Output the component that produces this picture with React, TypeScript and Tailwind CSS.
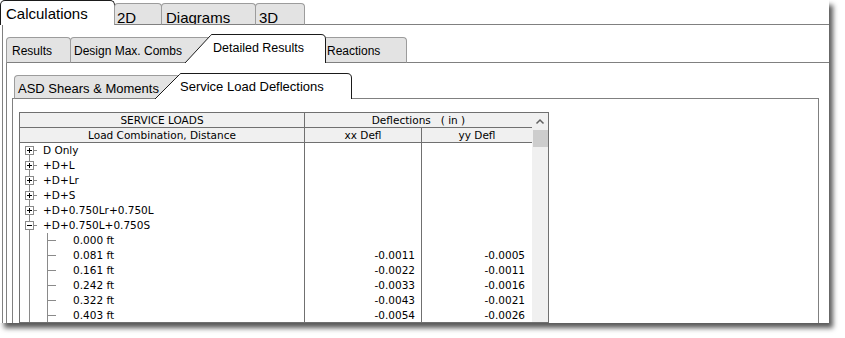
import React from "react";

const LINE = "#8a8a8a";

function TreeParent({ expanded, first }: { expanded?: boolean; first?: boolean }) {
  return (
    <svg width="22" height="15" className="shrink-0" shapeRendering="crispEdges">
      {!first && <line x1="9.5" y1="0" x2="9.5" y2="3" stroke={LINE} />}
      <line x1="9.5" y1="12" x2="9.5" y2="15" stroke={LINE} />
      <line x1="14" y1="7.5" x2="17" y2="7.5" stroke={LINE} />
      <rect x="5.5" y="3.5" width="8" height="8" fill="#fff" stroke={LINE} />
      <line x1="7" y1="7.5" x2="12" y2="7.5" stroke="#000" />
      {!expanded && <line x1="9.5" y1="5" x2="9.5" y2="10" stroke="#000" />}
    </svg>
  );
}

function TreeChild() {
  return (
    <svg width="52" height="15" className="shrink-0" shapeRendering="crispEdges">
      <line x1="9.5" y1="0" x2="9.5" y2="15" stroke={LINE} />
      <line x1="27.5" y1="0" x2="27.5" y2="15" stroke={LINE} />
      <line x1="28" y1="7.5" x2="36" y2="7.5" stroke={LINE} />
    </svg>
  );
}

function Row({ tree, label, xx, yy }: { tree: React.ReactNode; label: string; xx?: string; yy?: string }) {
  return (
    <div className="flex h-[15px] shrink-0 leading-[15px]">
      <div className="w-[285px] border-r border-[#707070] flex items-center">
        {tree}
        <span className="whitespace-pre pl-[1px]">{label}</span>
      </div>
      <div className="w-[117px] border-r border-[#707070] text-right pr-[6px]">{xx}</div>
      <div className="w-[110px] text-right pr-[7px]">{yy}</div>
    </div>
  );
}

const parents = ["D Only", "+D+L", "+D+Lr", "+D+S", "+D+0.750Lr+0.750L"];
const children: [string, string, string][] = [
  ["0.000 ft", "", ""],
  ["0.081 ft", "-0.0011", "-0.0005"],
  ["0.161 ft", "-0.0022", "-0.0011"],
  ["0.242 ft", "-0.0033", "-0.0016"],
  ["0.322 ft", "-0.0043", "-0.0021"],
  ["0.403 ft", "-0.0054", "-0.0026"],
];

export default function App() {
  return (
    <div className="w-[845px] h-[338px] bg-white overflow-hidden font-['Liberation_Sans',Arial,sans-serif] text-black">
      <div className="w-[829px] h-[323px] bg-white flex flex-col overflow-hidden shadow-[4px_5px_5px_rgba(0,0,0,0.65)]">
        {/* Level 1 tabs */}
        <div className="flex items-end h-[25px] shrink-0">
          <div className="w-[115px] h-[25px] bg-white border border-b-0 border-[#1a1a1a] rounded-t-[5px] pl-[5px] pt-[5px] text-[15px] leading-none whitespace-nowrap">
            Calculations
          </div>
          <div className="-ml-px w-[48px] h-[22px] overflow-hidden border border-[#9c9c9c] border-b-[#808080] bg-[#e3e3e3] rounded-t-[4px] pl-[2px] pt-[6px] text-[15px] leading-none">
            2D
          </div>
          <div className="-ml-px w-[95px] h-[22px] overflow-hidden border border-[#9c9c9c] border-b-[#808080] bg-[#e3e3e3] rounded-t-[4px] pl-[4px] pt-[6px] text-[15px] leading-none">
            Diagrams
          </div>
          <div className="-ml-px w-[50px] h-[22px] overflow-hidden border border-[#9c9c9c] border-b-[#808080] bg-[#e3e3e3] rounded-t-[4px] pl-[3px] pt-[6px] text-[15px] leading-none">
            3D
          </div>
          <div className="flex-1 border-b border-[#808080]" />
        </div>

        {/* Level 1 body */}
        <div className="flex-1 min-h-0 ml-[2px] border-l border-[#808080] pl-[3px] pt-[9px] flex flex-col">
          {/* Level 2 tabs */}
          <div className="flex items-end h-[29px] shrink-0">
            <div className="w-[65px] h-[26px] border border-[#9c9c9c] border-b-[#808080] bg-[#e3e3e3] rounded-t-[4px] pl-[5px] pt-[7px] text-[12px] leading-none whitespace-nowrap">
              Results
            </div>
            <div className="-ml-px w-[141px] h-[26px] border border-[#9c9c9c] border-b-[#808080] bg-[#e3e3e3] rounded-t-[4px] pl-[3px] pt-[7px] text-[12px] leading-none whitespace-nowrap">
              Design Max. Combs
            </div>
            <div className="relative -ml-[26px] w-[141px] h-[29px]">
              <svg className="absolute inset-0" width="141" height="29">
                <path d="M0,29 L25.5,1.5 Q26,0.5 27,0.5 L136,0.5 Q140.5,0.5 140.5,5 L140.5,29" fill="#fff" stroke="#1a1a1a" />
              </svg>
              <div className="relative pl-[28px] pt-[8px] text-[12.5px] leading-none whitespace-nowrap">Detailed Results</div>
            </div>
            <div className="w-[81px] h-[26px] border-t border-r border-b border-[#9c9c9c] border-b-[#808080] bg-[#e3e3e3] rounded-tr-[4px] pl-[1px] pt-[7px] text-[12px] leading-none whitespace-nowrap">
              Reactions
            </div>
            <div className="flex-1 border-b border-[#808080]" />
          </div>

          {/* Level 2 body */}
          <div className="flex-1 min-h-0 border-l border-[#808080] pl-[5px] pt-[10px] flex flex-col">
            <div className="w-[807px] flex-1 min-h-0 flex flex-col">
              {/* Level 3 tabs */}
              <div className="flex items-end h-[26px] shrink-0">
                <div className="w-[2px] border-b border-[#808080]" />
                <div className="w-[166px] h-[24px] border border-[#9c9c9c] border-b-[#808080] bg-[#e3e3e3] rounded-t-[4px] pl-[3px] pt-[6px] text-[13px] leading-none whitespace-nowrap">
                  ASD Shears &amp; Moments
                </div>
                <div className="relative -ml-[25px] w-[197px] h-[26px]">
                  <svg className="absolute inset-0" width="197" height="26">
                    <path d="M0,26 L24.5,1.5 Q25,0.5 26,0.5 L192,0.5 Q196.5,0.5 196.5,5 L196.5,26" fill="#fff" stroke="#1a1a1a" />
                  </svg>
                  <div className="relative pl-[25px] pt-[7px] text-[13px] leading-none whitespace-nowrap">Service Load Deflections</div>
                </div>
                <div className="flex-1 border-b border-[#808080]" />
              </div>

              {/* Level 3 body */}
              <div className="flex-1 min-h-0 border-l border-r border-[#808080] pl-[6px] pt-[13px] flex flex-col">
                <div className="w-[530px] flex-1 min-h-0 border border-[#707070] flex bg-white font-['DejaVu_Sans',Verdana,sans-serif] text-[10.5px] overflow-hidden">
                  <div className="w-[512px] flex flex-col">
                    <div className="flex h-[15px] shrink-0 border-b border-[#707070] bg-[#f0f0f0] leading-[14px]">
                      <div className="w-[285px] border-r border-[#707070] text-center">SERVICE LOADS</div>
                      <div className="flex-1 text-center whitespace-pre">Deflections   ( in )</div>
                    </div>
                    <div className="flex h-[15px] shrink-0 border-b border-[#707070] bg-[#f0f0f0] leading-[14px]">
                      <div className="w-[285px] border-r border-[#707070] text-center">Load Combination, Distance</div>
                      <div className="w-[117px] border-r border-[#707070] text-center">xx Defl</div>
                      <div className="flex-1 text-center">yy Defl</div>
                    </div>
                    {parents.map((p, i) => (
                      <Row key={p} tree={<TreeParent first={i === 0} />} label={p} />
                    ))}
                    <Row tree={<TreeParent expanded />} label={"+D+0.750L+0.750S"} />
                    {children.map((c) => (
                      <Row key={c[0]} tree={<TreeChild />} label={c[0]} xx={c[1]} yy={c[2]} />
                    ))}
                  </div>
                  <div className="w-[16px] bg-[#f0f0f0] flex flex-col items-center">
                    <svg width="16" height="16" className="shrink-0">
                      <polyline points="4.5,10.5 8,7 11.5,10.5" fill="none" stroke="#606060" strokeWidth="1.5" />
                    </svg>
                    <div className="mt-[1px] w-[15px] h-[17px] bg-[#cdcdcd]" />
                  </div>
                </div>
              </div>
            </div>
          </div>
        </div>
      </div>
    </div>
  );
}
